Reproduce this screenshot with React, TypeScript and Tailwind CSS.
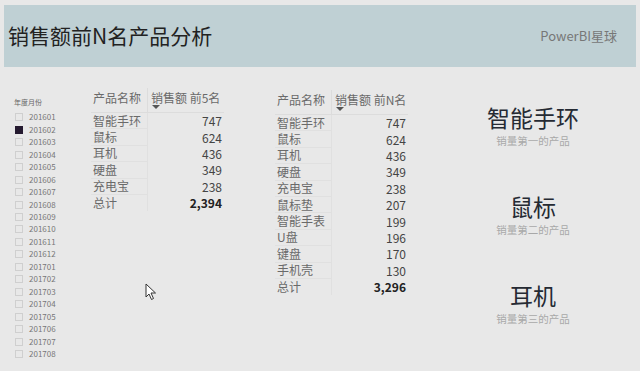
import React from "react";

const months = [
  "201601", "201602", "201603", "201604", "201605", "201606", "201607", "201608", "201609", "201610",
  "201611", "201612", "201701", "201702", "201703", "201704", "201705", "201706", "201707", "201708",
];

const top5 = [
  ["智能手环", "747"],
  ["鼠标", "624"],
  ["耳机", "436"],
  ["硬盘", "349"],
  ["充电宝", "238"],
];

const topN = [
  ["智能手环", "747"],
  ["鼠标", "624"],
  ["耳机", "436"],
  ["硬盘", "349"],
  ["充电宝", "238"],
  ["鼠标垫", "207"],
  ["智能手表", "199"],
  ["U盘", "196"],
  ["键盘", "170"],
  ["手机壳", "130"],
];

const cards = [
  { name: "智能手环", desc: "销量第一的产品" },
  { name: "鼠标", desc: "销量第二的产品" },
  { name: "耳机", desc: "销量第三的产品" },
];

const font = { fontFamily: '"Noto Sans CJK SC", "Noto Sans", sans-serif' };

const Table: React.FC<{ title: string; rows: string[][]; total: string }> = ({ title, rows, total }) => (
  <div className="flex flex-col text-[12px] leading-none">
    <div className="flex h-[25px] border-b border-[#dcdcdc]">
      <div className="w-[56px] pl-[2px] pt-[4px] text-[#6a6a6a]">产品名称</div>
      <div className="relative w-[77px] border-l border-[#dcdcdc] pl-[3px] pt-[4px] text-[#6a6a6a] whitespace-nowrap">
        {title}
        <span className="absolute left-[4px] top-[17px] h-0 w-0 border-x-[4px] border-t-[4px] border-x-transparent border-t-[#555]" />
      </div>
    </div>
    {rows.map(([n, v], i) => (
      <div key={i} className="flex h-[16.4px] items-center">
        <div className="flex h-full w-[56px] items-center border-b border-[#e0e0e0] pl-[2px] text-[#6a6a6a]">{n}</div>
        <div className="flex h-full w-[77px] items-center justify-end border-l border-[#e0e0e0] pr-[2px] text-[#444]">{v}</div>
      </div>
    ))}
    <div className="flex h-[16.4px] items-center">
      <div className="flex h-full w-[56px] items-center pl-[2px] text-[#6a6a6a]">总计</div>
      <div className="flex h-full w-[77px] items-center justify-end border-l border-[#e0e0e0] pr-[2px] font-bold text-[#222]">{total}</div>
    </div>
  </div>
);

export default function App() {
  return (
    <div className="relative h-[371px] w-[640px] overflow-hidden bg-[#e8e8e8]" style={font}>
      <div className="mx-[4px] mt-[5px] flex h-[62px] items-center justify-between bg-[#bfd0d4] pl-[4px] pr-[19px]">
        <div className="text-[21px] text-[#222]">销售额前N名产品分析</div>
        <div className="text-[13px] text-[#777]">PowerBI星球</div>
      </div>

      <div className="flex">
        <div className="ml-[14px] mt-[32px] w-[60px]">
          <div className="text-[7px] leading-none text-[#666]">年度月份</div>
          <div className="mt-[5px] flex flex-col">
            {months.map((m, i) => (
              <div key={m} className="flex h-[12.47px] items-center">
                <span
                  className={
                    i === 1
                      ? "ml-[1px] h-[8px] w-[8px] bg-[#251a30]"
                      : "ml-[1px] h-[8px] w-[8px] border border-[#cfcfcf]"
                  }
                />
                <span className="ml-[6px] text-[8px] text-[#777]">{m}</span>
              </div>
            ))}
          </div>
        </div>

        <div className="ml-[17px] mt-[21px]">
          <Table title="销售额 前5名" rows={top5} total="2,394" />
        </div>

        <div className="ml-[51px] mt-[23px]">
          <Table title="销售额 前N名" rows={topN} total="3,296" />
        </div>

        <div className="ml-[50px] mt-[37px] flex w-[150px] flex-col items-center">
          {cards.map((c, i) => (
            <div key={i} className={i === 0 ? "flex flex-col items-center" : "mt-[46px] flex flex-col items-center"}>
              <div className="text-[23px] leading-[26px] text-[#252a33]">{c.name}</div>
              <div className="mt-[5px] text-[10.5px] leading-[12px] text-[#a8a8a8]">{c.desc}</div>
            </div>
          ))}
        </div>
      </div>

      <svg className="absolute left-[145px] top-[283px]" width="13" height="18" viewBox="0 0 13 18">
        <path d="M1 1 L1 14 L4 11 L6.5 16.5 L8.5 15.5 L6 10 L10.5 10 Z" fill="#fff" stroke="#333" strokeWidth="1" strokeLinejoin="round" />
      </svg>
    </div>
  );
}
